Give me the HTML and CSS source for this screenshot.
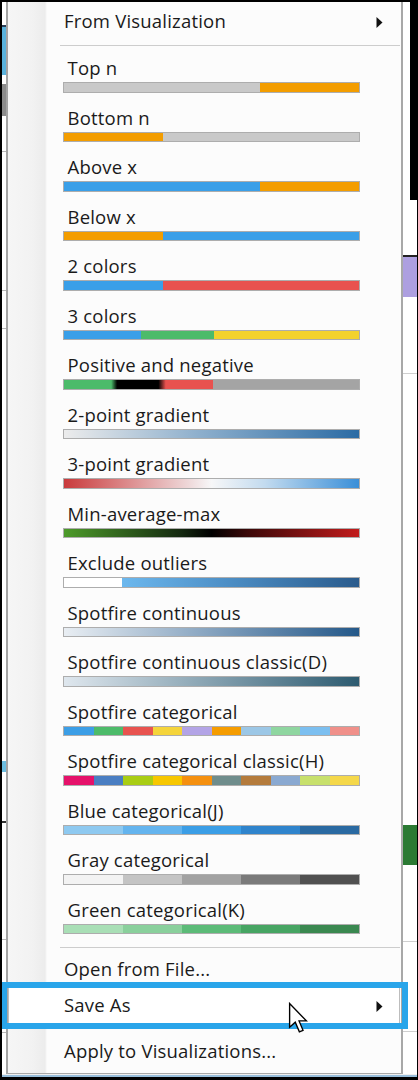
FILE: index.html
```html
<!DOCTYPE html>
<html lang="en">
<head>
<meta charset="utf-8">
<title>Color scheme menu</title>
<link rel="stylesheet" href="styles.css">
</head>
<body>
<div class="screen">
  <div class="main-row">
    <div class="app-left">
      <div class="s s-w23"></div>
      <div class="s s-navy"></div>
      <div class="s s-blue48"></div>
      <div class="s s-w9"></div>
      <div class="s s-gray32"></div>
      <div class="s s-w35"></div>
      <div class="s s-tick"></div>
      <div class="s s-w138"></div>
      <div class="s s-tick"></div>
      <div class="s s-w37"></div>
      <div class="s s-tick"></div>
      <div class="s s-w432"></div>
      <div class="s s-blue11"></div>
      <div class="s s-w49"></div>
      <div class="s s-dark2"></div>
      <div class="s s-w116"></div>
      <div class="s s-tick"></div>
      <div class="s s-w92"></div>
      <div class="s s-tick"></div>
    </div>

    <div class="menu">
      <div class="top-item">
        <span>From Visualization</span>
        <svg class="sub-arrow" width="7" height="11" viewBox="0 0 7 11"><polygon points="0.5,0 6.5,5.5 0.5,11" fill="#111"/></svg>
      </div>
      <div class="sep"></div>

      <ul class="schemes">
        <li class="scheme"><span class="lbl">Top n</span><div class="bar b-topn"></div></li>
        <li class="scheme"><span class="lbl">Bottom n</span><div class="bar b-bottomn"></div></li>
        <li class="scheme"><span class="lbl">Above x</span><div class="bar b-abovex"></div></li>
        <li class="scheme"><span class="lbl">Below x</span><div class="bar b-belowx"></div></li>
        <li class="scheme"><span class="lbl">2 colors</span><div class="bar b-2col"></div></li>
        <li class="scheme"><span class="lbl">3 colors</span><div class="bar b-3col"></div></li>
        <li class="scheme"><span class="lbl">Positive and negative</span><div class="bar b-posneg"></div></li>
        <li class="scheme"><span class="lbl">2-point gradient</span><div class="bar b-2pt"></div></li>
        <li class="scheme"><span class="lbl">3-point gradient</span><div class="bar b-3pt"></div></li>
        <li class="scheme"><span class="lbl">Min-average-max</span><div class="bar b-minmax"></div></li>
        <li class="scheme"><span class="lbl">Exclude outliers</span><div class="bar b-excl"></div></li>
        <li class="scheme"><span class="lbl">Spotfire continuous</span><div class="bar b-cont"></div></li>
        <li class="scheme"><span class="lbl">Spotfire continuous classic(D)</span><div class="bar b-contc"></div></li>
        <li class="scheme"><span class="lbl">Spotfire categorical</span>
          <div class="bar seg">
            <i class="c-a1"></i><i class="c-a2"></i><i class="c-a3"></i><i class="c-a4"></i><i class="c-a5"></i><i class="c-a6"></i><i class="c-a7"></i><i class="c-a8"></i><i class="c-a9"></i><i class="c-a10"></i>
          </div>
        </li>
        <li class="scheme"><span class="lbl">Spotfire categorical classic(H)</span>
          <div class="bar seg">
            <i class="c-h1"></i><i class="c-h2"></i><i class="c-h3"></i><i class="c-h4"></i><i class="c-h5"></i><i class="c-h6"></i><i class="c-h7"></i><i class="c-h8"></i><i class="c-h9"></i><i class="c-h10"></i>
          </div>
        </li>
        <li class="scheme"><span class="lbl">Blue categorical(J)</span>
          <div class="bar seg">
            <i class="c-j1"></i><i class="c-j2"></i><i class="c-j3"></i><i class="c-j4"></i><i class="c-j5"></i>
          </div>
        </li>
        <li class="scheme"><span class="lbl">Gray categorical</span>
          <div class="bar seg">
            <i class="c-g1"></i><i class="c-g2"></i><i class="c-g3"></i><i class="c-g4"></i><i class="c-g5"></i>
          </div>
        </li>
        <li class="scheme"><span class="lbl">Green categorical(K)</span>
          <div class="bar seg">
            <i class="c-k1"></i><i class="c-k2"></i><i class="c-k3"></i><i class="c-k4"></i><i class="c-k5"></i>
          </div>
        </li>
      </ul>

      <div class="sep sep2"></div>
      <div class="row">Open from File...</div>
      <div class="row row-hl">
        <span>Save As</span>
        <svg class="sub-arrow" width="7" height="11" viewBox="0 0 7 11"><polygon points="0.5,0 6.5,5.5 0.5,11" fill="#111"/></svg>
      </div>
      <div class="row row-apply">Apply to Visualizations...</div>
    </div>

    <div class="app-right">
      <div class="r-top"><div class="r-top-w"></div><div class="r-top-b"></div></div>
      <div class="s s-w53"></div>
      <div class="s s-black2"></div>
      <div class="s s-lav"></div>
      <div class="s s-w76"></div>
      <div class="s s-line"></div>
      <div class="s s-w451"></div>
      <div class="s s-green"></div>
      <div class="s s-w76"></div>
      <div class="s s-line"></div>
      <div class="s s-w89"></div>
      <div class="s s-line"></div>
    </div>
  </div>
  <div class="bottom-band"></div>
</div>

<div class="annot"></div>
<svg class="cursor" width="20" height="32" viewBox="0 0 13 21">
  <path d="M1 1 V16.6 L4.7 13.3 L7.4 19.6 L9.8 18.6 L7.2 12.4 L12 12.4 Z" fill="#fff" stroke="#000" stroke-width="0.9" stroke-linejoin="miter"/>
</svg>
</body>
</html>
```

FILE: styles.css
```css
* { box-sizing: border-box; }

html, body {
  margin: 0;
  padding: 0;
}

body {
  width: 418px;
  height: 1080px;
  overflow: hidden;
  background: #000;
  font-family: "Open Sans", "Noto Sans", "Liberation Sans", sans-serif;
  color: #1a1a1a;
  position: relative;
}

.screen {
  margin: 2px 1px 0 2px;
  height: 1075px;
  background: #fff;
  display: flex;
  flex-direction: column;
}

.main-row {
  display: flex;
  height: 1072px;
}

/* underlying application, left sliver */
.app-left {
  width: 4px;
  flex: none;
  background: #fff;
}
.s { width: 100%; }
.s-w23 { height: 23px; }
.s-navy { height: 2px; background: #2b3d55; }
.s-blue48 { height: 48px; background: #5ab2dc; }
.s-w9 { height: 9px; }
.s-gray32 { height: 32px; background: #8c8c8c; }
.s-w35 { height: 35px; }
.s-tick { height: 1px; background: #b8b8b8; }
.s-w138 { height: 138px; }
.s-w37 { height: 37px; }
.s-w432 { height: 432px; }
.s-blue11 { height: 11px; background: #6cbde0; }
.s-w49 { height: 49px; }
.s-dark2 { height: 2px; background: #333; }
.s-w116 { height: 116px; }
.s-w92 { height: 92px; }

/* underlying application, right sliver */
.app-right {
  width: 14px;
  flex: none;
  background: #fff;
}
.r-top { display: flex; height: 198px; }
.r-top-w { width: 7px; background: #fff; }
.r-top-b { flex: 1; background: #000; }
.s-w53 { height: 55px; }
.s-black2 { height: 2px; background: #222; }
.s-lav { height: 40px; background: #ad9fe0; }
.s-w76 { height: 76px; }
.s-line { height: 1px; background: #cfcfcf; }
.s-w451 { height: 451px; }
.s-green { height: 40px; background: #2b7a33; }
.s-w89 { height: 89px; }

.bottom-band {
  height: 3px;
  background: linear-gradient(#efefef 0 34%, #98bedb 34%);
}

/* the menu */
.menu {
  width: 397px;
  flex: none;
  height: 1072px;
  border-left: 2px solid #a3a3a3;
  border-right: 2px solid #a8a8a8;
  border-bottom: 1px solid #a8a8a8;
  background:
    linear-gradient(to right, #f6f6f6 0, #f2f2f2 24px, #ececec 37px, #f4f4f4 38px, #fcfcfc 39px) no-repeat,
    #fcfcfc;
  background-size: 40px 100%, auto;
  font-size: 18.5px;
  letter-spacing: 0.2px;
  overflow: hidden;
}

.top-item {
  display: flex;
  align-items: center;
  justify-content: space-between;
  padding: 7px 18px 12px 56px;
  line-height: 24px;
}

.sub-arrow {
  flex: none;
  display: block;
  margin-top: 3px;
}

.sep {
  height: 1px;
  background: #cdcdcd;
  margin: 0 1px 4px 52px;
}

.schemes {
  list-style: none;
  margin: 0;
  padding: 0;
}

.scheme {
  height: 49.5px;
  padding: 7px 0 0 55px;
}

.lbl {
  display: block;
  line-height: 22px;
  height: 22px;
  padding-left: 4.5px;
  white-space: nowrap;
}

.bar {
  width: 297px;
  height: 10.5px;
  margin-top: 3px;
  border: 1px solid #adadad;
}

.seg { display: flex; }
.seg i { flex: 1; display: block; }

.b-topn { background: linear-gradient(to right, #c9c9c9 0 66.5%, #f39d00 66.5%); }
.b-bottomn { background: linear-gradient(to right, #f39d00 0 33.5%, #c9c9c9 33.5%); }
.b-abovex { background: linear-gradient(to right, #3a9fe8 0 66.5%, #f39d00 66.5%); }
.b-belowx { background: linear-gradient(to right, #f39d00 0 33.5%, #3a9fe8 33.5%); }
.b-2col { background: linear-gradient(to right, #3a9fe8 0 33.5%, #e8524f 33.5%); }
.b-3col { background: linear-gradient(to right, #3a9fe8 0 26%, #4cbb6a 26% 51%, #f3d22d 51%); }
.b-posneg { background: linear-gradient(to right, #4cbb6a 0 16%, #000 18%, #000 32%, #e8524f 34.5%, #e8524f 50.5%, #a4a4a4 50.5%); }
.b-2pt { background: linear-gradient(to right, #ececec, #8fb0cd 45%, #2b6ba4); }
.b-3pt { background: linear-gradient(to right, #c93a3c, #eed7d8 42%, #f7f7f8 50%, #c3dbef 68%, #3a8fd8); }
.b-minmax { background: linear-gradient(to right, #4d9b2a, #142810 40%, #000 50%, #3a0808 62%, #c21c1c); }
.b-excl { background: linear-gradient(to right, #fff 0 19.5%, #6cb8ee 19.5%, #4d8fc6 55%, #2a5b8c); }
.b-cont { background: linear-gradient(to right, #e9eef3, #8faac4 45%, #245889); }
.b-contc { background: linear-gradient(to right, #dfe7ee, #8ea8b6 45%, #2d5b70); }

.c-a1 { background: #3c9ee6; }
.c-a2 { background: #4dbb6a; }
.c-a3 { background: #e8534f; }
.c-a4 { background: #f5d43a; }
.c-a5 { background: #b3a4e6; }
.c-a6 { background: #f59c00; }
.c-a7 { background: #9cc7e6; }
.c-a8 { background: #8fd6a0; }
.c-a9 { background: #7cbff0; }
.c-a10 { background: #f0908a; }

.c-h1 { background: #e5116a; }
.c-h2 { background: #4a7ec2; }
.c-h3 { background: #a9cd14; }
.c-h4 { background: #f7c700; }
.c-h5 { background: #f5900f; }
.c-h6 { background: #6f8d8c; }
.c-h7 { background: #b47b3c; }
.c-h8 { background: #8aa9d1; }
.c-h9 { background: #c7e06c; }
.c-h10 { background: #f5d84a; }

.c-j1 { background: #8ec9f0; }
.c-j2 { background: #64b4ee; }
.c-j3 { background: #3b9ee6; }
.c-j4 { background: #2f84cc; }
.c-j5 { background: #2a6aa2; }

.c-g1 { background: #f3f3f3; }
.c-g2 { background: #c4c4c4; }
.c-g3 { background: #a2a2a2; }
.c-g4 { background: #7a7a7a; }
.c-g5 { background: #505050; }

.c-k1 { background: #a9dfb6; }
.c-k2 { background: #8ad09c; }
.c-k3 { background: #5cbb78; }
.c-k4 { background: #47a563; }
.c-k5 { background: #3a8850; }

.sep2 { margin: 6px 1px 3px 52px; }

.row {
  height: 36px;
  line-height: 36px;
  padding: 0 18px 0 56px;
  white-space: nowrap;
}

.row-hl {
  display: flex;
  align-items: center;
  justify-content: space-between;
  background: #fff;
  border-left: 1px solid #bdbdbd;
  border-right: 1px solid #bdbdbd;
  margin-right: 1px;
  padding-left: 55px;
  padding-right: 16px;
}

.row-apply { margin-top: 9.5px; }

/* annotation rectangle drawn over the screenshot */
.annot {
  position: absolute;
  left: 2px;
  top: 982px;
  width: 406px;
  height: 47px;
  border: 6px solid #29a5ea;
  border-left-width: 5px;
}

.cursor {
  position: absolute;
  left: 288px;
  top: 1002px;
  display: block;
}
```
